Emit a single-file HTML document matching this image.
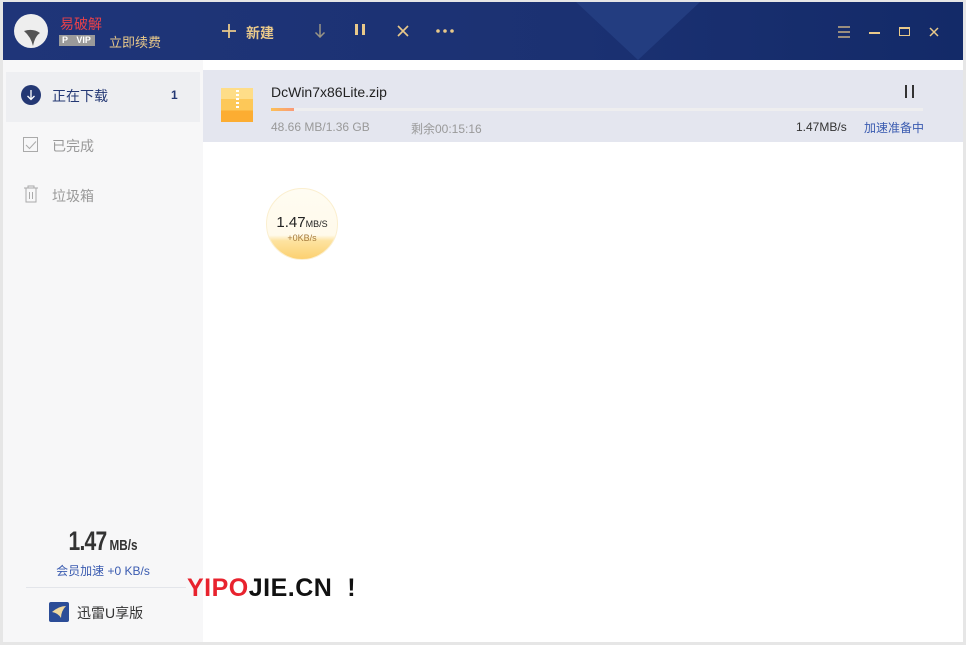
<!DOCTYPE html>
<html><head><meta charset="utf-8"><style>
*{margin:0;padding:0;box-sizing:border-box}
body{width:966px;height:645px;background:#e6e6e6;font-family:"Liberation Sans","Noto Sans CJK SC",sans-serif;position:relative;overflow:hidden}
.win{position:absolute;left:3px;top:2px;width:960px;height:640px;background:#fff;overflow:hidden}
.hdr{position:absolute;left:0;top:0;width:960px;height:58px;background:linear-gradient(90deg,#1f3579,#1b3172 60%,#132a68)}
.tri{position:absolute;left:573px;top:0;width:0;height:0;border-left:62px solid transparent;border-right:62px solid transparent;border-top:58px solid #233d80}
.side{position:absolute;left:0;top:58px;width:200px;height:582px;background:#f7f7f8}
.t{position:absolute;white-space:nowrap}
</style></head><body>
<div class="win">
<div class="hdr"><div class="tri"></div>
<svg class="t" style="left:10px;top:11px" width="36" height="36" viewBox="0 0 36 36"><circle cx="18" cy="18" r="17" fill="#eeeeee"/><path d="M11 18 Q20 15 27 20 Q22 23 20 33 Q18 24 11 18Z" fill="#555"/></svg>
<div class="t" style="left:57px;top:12px;color:#e8414a;font-size:14px">易破解</div>
<div class="t" style="left:56px;top:33px;width:36px;height:11px;background:#9a9a9a;color:#fff;font-size:9px;font-weight:bold;line-height:11px;padding-left:3px">P <span style="margin-left:6px">VIP</span></div>
<div class="t" style="left:106px;top:30px;color:#e9c98a;font-size:13px">立即续费</div>
<svg class="t" style="left:219px;top:22px" width="14" height="14"><path d="M7 0V14M0 7H14" stroke="#e9c98a" stroke-width="1.8"/></svg>
<div class="t" style="left:243px;top:21px;color:#e9c98a;font-size:14px;font-weight:bold">新建</div>
<svg class="t" style="left:311px;top:22px" width="12" height="14"><path d="M6 0V13M1.5 8.5L6 13L10.5 8.5" stroke="#9a9585" stroke-width="1.5" fill="none"/></svg>
<div class="t" style="left:352px;top:22px;width:3px;height:11px;background:#e9c98a"></div>
<div class="t" style="left:359px;top:22px;width:3px;height:11px;background:#e9c98a"></div>
<svg class="t" style="left:394px;top:23px" width="12" height="12"><path d="M1 1L11 11M11 1L1 11" stroke="#e9c98a" stroke-width="1.6"/></svg>
<svg class="t" style="left:433px;top:27px" width="18" height="4"><circle cx="2" cy="2" r="1.8" fill="#e9c98a"/><circle cx="9" cy="2" r="1.8" fill="#e9c98a"/><circle cx="16" cy="2" r="1.8" fill="#e9c98a"/></svg>
<svg class="t" style="left:834px;top:24px" width="14" height="12"><path d="M1 1H13M1 6H13M1 11H13" stroke="#e9c98a" stroke-width="1.3"/></svg>
<div class="t" style="left:866px;top:30px;width:11px;height:1.5px;background:#e9c98a"></div>
<div class="t" style="left:896px;top:25px;width:11px;height:9px;border:1.5px solid #e9c98a;border-top-width:2.5px"></div>
<svg class="t" style="left:926px;top:25px" width="10" height="10"><path d="M1 1L9 9M9 1L1 9" stroke="#e9c98a" stroke-width="1.5"/></svg>
</div>
<div class="side">
<div class="t" style="left:3px;top:12px;width:194px;height:50px;background:#eeeff2"></div>
<svg class="t" style="left:18px;top:25px" width="20" height="20"><circle cx="10" cy="10" r="10" fill="#243874"/><path d="M10 5V14M6.5 11L10 14.5L13.5 11" stroke="#fff" stroke-width="1.3" fill="none"/></svg>
<div class="t" style="left:49px;top:26px;color:#243874;font-size:14px">正在下载</div>
<div class="t" style="left:168px;top:28px;color:#243874;font-size:12px;font-weight:bold">1</div>
<div class="t" style="left:20px;top:77px;width:15px;height:15px;border:1px solid #aaa"></div>
<svg class="t" style="left:22px;top:80px" width="12" height="10"><path d="M1 5L4.5 8.5L11 1.5" stroke="#aaa" fill="none"/></svg>
<div class="t" style="left:49px;top:76px;color:#999;font-size:14px">已完成</div>
<svg class="t" style="left:20px;top:125px" width="16" height="18"><path d="M1 3H15M5 3V1H11V3M3 3V17H13V3M6.5 7V14M9.5 7V14" stroke="#aaa" fill="none"/></svg>
<div class="t" style="left:49px;top:126px;color:#999;font-size:14px">垃圾箱</div>
<div class="t" style="left:0;top:466px;width:200px;text-align:center;color:#333;font-size:27px;font-weight:bold;letter-spacing:-1px;transform:scaleX(.78)">1.47<span style="font-size:15px;margin-left:4px;letter-spacing:0">MB/s</span></div>
<div class="t" style="left:0;top:502px;width:200px;text-align:center;color:#3a5bb0;font-size:12px">会员加速 +0 KB/s</div>
<div class="t" style="left:23px;top:527px;width:160px;height:1px;background:#e3e5ea"></div>
<svg class="t" style="left:46px;top:542px" width="20" height="20"><rect width="20" height="20" rx="2" fill="#2c4d97"/><path d="M3 10Q10 4 17 4Q12 9 12 16Q9 11 3 10Z" fill="#f0d9a0"/></svg>
<div class="t" style="left:74px;top:543px;color:#333;font-size:14px">迅雷U享版</div>
</div>
<div class="t" style="left:200px;top:68px;width:760px;height:72px;background:#e4e6ef"></div>
<div class="t" style="left:218px;top:86px;width:32px;height:34px;background:linear-gradient(#fedd88 0 33%,#fdc858 33% 66%,#fcad32 66%)"></div>
<div class="t" style="left:233px;top:88px;width:3px;height:18px;background:repeating-linear-gradient(#fff 0 2px,transparent 2px 4px)"></div>
<div class="t" style="left:268px;top:82px;color:#222;font-size:14px">DcWin7x86Lite.zip</div>
<div class="t" style="left:268px;top:106px;width:652px;height:3px;background:#eeeeef"></div>
<div class="t" style="left:268px;top:106px;width:23px;height:3px;background:linear-gradient(90deg,#fcc056,#fa9a78)"></div>
<div class="t" style="left:268px;top:118px;color:#999;font-size:12px">48.66 MB/1.36 GB</div>
<div class="t" style="left:408px;top:118px;color:#999;font-size:12px">剩余00:15:16</div>
<div class="t" style="left:902px;top:83px;width:1.5px;height:13px;background:#333"></div>
<div class="t" style="left:909px;top:83px;width:1.5px;height:13px;background:#333"></div>
<div class="t" style="left:793px;top:118px;color:#333;font-size:12px">1.47MB/s</div>
<div class="t" style="left:861px;top:117px;color:#3a5bb0;font-size:12px">加速准备中</div>
<div class="t" style="left:263px;top:186px;width:72px;height:72px;border-radius:50%;border:1px solid #fbefcf;background:linear-gradient(#fffcf2 0%,#fffaeb 66%,#fde3a0 74%,#fcd070 100%);overflow:hidden"></div>
<div class="t" style="left:263px;top:212px;width:72px;text-align:center;color:#222;font-size:15px">1.47<span style="font-size:9px">MB/S</span></div>
<div class="t" style="left:263px;top:231px;width:72px;text-align:center;color:#a67a3a;font-size:9px">+0KB/s</div>
<div class="t" style="left:184px;top:572px;font-size:25px;font-weight:bold;letter-spacing:0.5px"><span style="color:#e8232e">YIPO</span><span style="color:#111">JIE.CN&nbsp;&nbsp;!</span></div>
</div>
</body></html>
